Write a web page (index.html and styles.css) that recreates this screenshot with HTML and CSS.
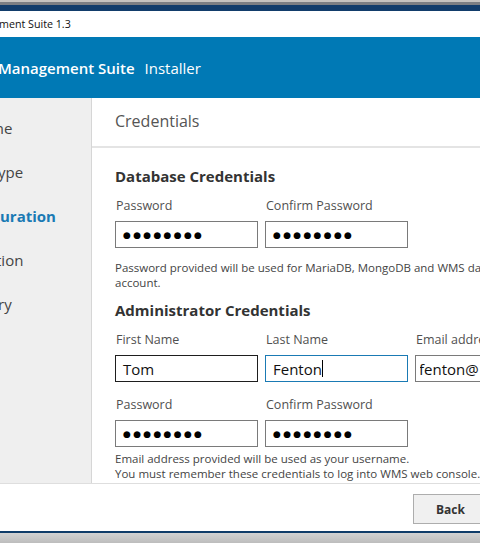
FILE: index.html
```html
<!DOCTYPE html>
<html lang="en">
<head>
<meta charset="utf-8">
<title>Management Suite 1.3 Installer</title>
<link rel="stylesheet" href="styles.css">
</head>
<body>
<div class="window">
  <div class="frame-top"></div>
  <div class="titlebar"><span class="title-text">ment Suite 1.3</span></div>
  <div class="header">
    <span class="brand">Management Suite</span>
    <span class="brand-sub">Installer</span>
  </div>
  <div class="main">
    <nav class="sidebar">
      <div class="step"><span class="frag s1">me</span></div>
      <div class="step"><span class="frag s2">ype</span></div>
      <div class="step active"><span class="frag">uration</span></div>
      <div class="step"><span class="frag s4">tion</span></div>
      <div class="step"><span class="frag s5">ry</span></div>
    </nav>
    <section class="content">
      <div class="content-head">Credentials</div>
      <div class="content-body">
        <h2 class="section-title">Database Credentials</h2>
        <div class="fields">
          <div class="field">
            <div class="label">Password</div>
            <div class="input"><span class="dots">●●●●●●●●</span></div>
          </div>
          <div class="field">
            <div class="label">Confirm Password</div>
            <div class="input"><span class="dots">●●●●●●●●</span></div>
          </div>
        </div>
        <p class="help">Password provided will be used for MariaDB, MongoDB and WMS database<br>account.</p>

        <h2 class="section-title admin">Administrator Credentials</h2>
        <div class="fields">
          <div class="field">
            <div class="label">First Name</div>
            <div class="input hover"><span class="val">Tom</span></div>
          </div>
          <div class="field">
            <div class="label">Last Name</div>
            <div class="input focus"><span class="val">Fenton</span><span class="caret"></span></div>
          </div>
          <div class="field">
            <div class="label">Email address</div>
            <div class="input email"><span class="clip"><span class="val scrolled">fenton@</span></span></div>
          </div>
        </div>
        <div class="fields second">
          <div class="field">
            <div class="label">Password</div>
            <div class="input"><span class="dots">●●●●●●●●</span></div>
          </div>
          <div class="field">
            <div class="label">Confirm Password</div>
            <div class="input"><span class="dots">●●●●●●●●</span></div>
          </div>
        </div>
        <p class="help last">Email address provided will be used as your username.<br>You must remember these credentials to log into WMS web console.</p>
      </div>
    </section>
  </div>
  <div class="footer">
    <button class="btn">Back</button>
    <button class="btn">Next</button>
  </div>
  <div class="frame-bottom"></div>
</div>
</body>
</html>
```
FILE: styles.css
```css
html, body {
  margin: 0;
  padding: 0;
  width: 480px;
  height: 543px;
  overflow: hidden;
  background: #c8c5c1;
}
.window {
  width: 480px;
  font-family: "Open Sans", "Noto Sans", sans-serif;
  color: #333;
}
.frame-top {
  height: 11px;
  background: linear-gradient(to bottom, #c7c4c0 0, #c7c4c0 2px, #7d7f83 2px, #7d7f83 5px, #123d6b 5px, #123d6b 11px);
}
.titlebar {
  height: 26px;
  background: #fff;
  display: flex;
  align-items: center;
  white-space: nowrap;
}
.title-text {
  font-size: 10.7px;
  color: #111;
  margin-left: -1px;
}
.header {
  height: 61px;
  background: #0079b5;
  display: flex;
  align-items: center;
  color: #fff;
  white-space: nowrap;
}
.brand {
  font-size: 15px;
  font-weight: 600;
  margin-left: -2px;
}
.brand-sub {
  font-size: 15px;
  margin-left: 10px;
}
.main {
  display: flex;
  height: 385px;
}
.sidebar {
  width: 92px;
  background: #efefef;
  border-right: 1px solid #d6d6d6;
  padding-top: 20px;
  box-sizing: border-box;
  flex: none;
  overflow: hidden;
}
.step {
  height: 44px;
  line-height: 20px;
  font-size: 15px;
  color: #444;
  white-space: nowrap;
}
.frag {
  display: inline-block;
}
.frag.s1 { margin-left: -10px; }
.frag.s2 { margin-left: -2px; }
.frag.s4 { margin-left: -4px; }
.frag.s5 { margin-left: -2px; }
.step.active {
  color: #1a7ab4;
  font-weight: 700;
}
.content {
  flex: 1;
  background: #fff;
  overflow: hidden;
}
.content-head {
  height: 50px;
  box-sizing: border-box;
  border-bottom: 2px solid #e4e4e4;
  padding-left: 23px;
  padding-bottom: 2px;
  display: flex;
  align-items: center;
  font-size: 16px;
  color: #555;
}
.content-body {
  padding-left: 23px;
  white-space: nowrap;
}
.section-title {
  margin: 18px 0 0 0;
  font-size: 15px;
  line-height: 20px;
  font-weight: 700;
  color: #333;
}
.section-title.admin {
  margin-top: 10px;
}
.fields {
  display: grid;
  grid-template-columns: 143px 143px 143px;
  column-gap: 7px;
  margin-top: 11px;
}
.fields.second {
  margin-top: 14px;
}
.field {
  display: flex;
  flex-direction: column;
}
.label {
  font-size: 12.5px;
  line-height: 18px;
  color: #505050;
  padding-left: 1px;
  margin-bottom: 6px;
}
.input {
  height: 27px;
  box-sizing: border-box;
  border: 1px solid #7a7a7a;
  display: flex;
  align-items: center;
  padding-left: 7px;
  overflow: hidden;
  background: #fff;
}
.input.hover {
  border-color: #1e1e1e;
}
.input.focus {
  border-color: #1a7ab4;
}
.input.email {
  padding-left: 4px;
}
.clip {
  display: flex;
  overflow: hidden;
  flex: 1;
}
.dots {
  font-family: "DejaVu Sans", sans-serif;
  font-size: 9px;
  letter-spacing: 2.3px;
  color: #000;
}
.val {
  font-size: 15px;
  color: #111;
}
.val.scrolled {
  margin-left: -1px;
}
.caret {
  width: 1px;
  height: 17px;
  background: #000;
}
.help {
  margin: 12px 0 0 0;
  font-size: 11.5px;
  line-height: 15px;
  color: #444;
}
.help.last {
  margin-top: 4px;
}
.footer {
  height: 47px;
  background: #fff;
  border-top: 1px solid #dedede;
  box-sizing: border-box;
  display: flex;
  align-items: flex-start;
  padding-left: 413px;
  padding-top: 10px;
  gap: 8px;
}
.btn {
  flex: none;
  width: 75px;
  height: 30px;
  background: #f0f0f0;
  border: 1px solid #adadad;
  font-family: "Open Sans", "Noto Sans", sans-serif;
  font-weight: 700;
  font-size: 12px;
  color: #333;
  padding: 0;
}
.frame-bottom {
  height: 13px;
  background: linear-gradient(to bottom, #fff 0, #fff 1px, #0f3c69 1px, #0f3c69 3px, #d2d2d2 3px, #bdbdbd 13px);
}
```
